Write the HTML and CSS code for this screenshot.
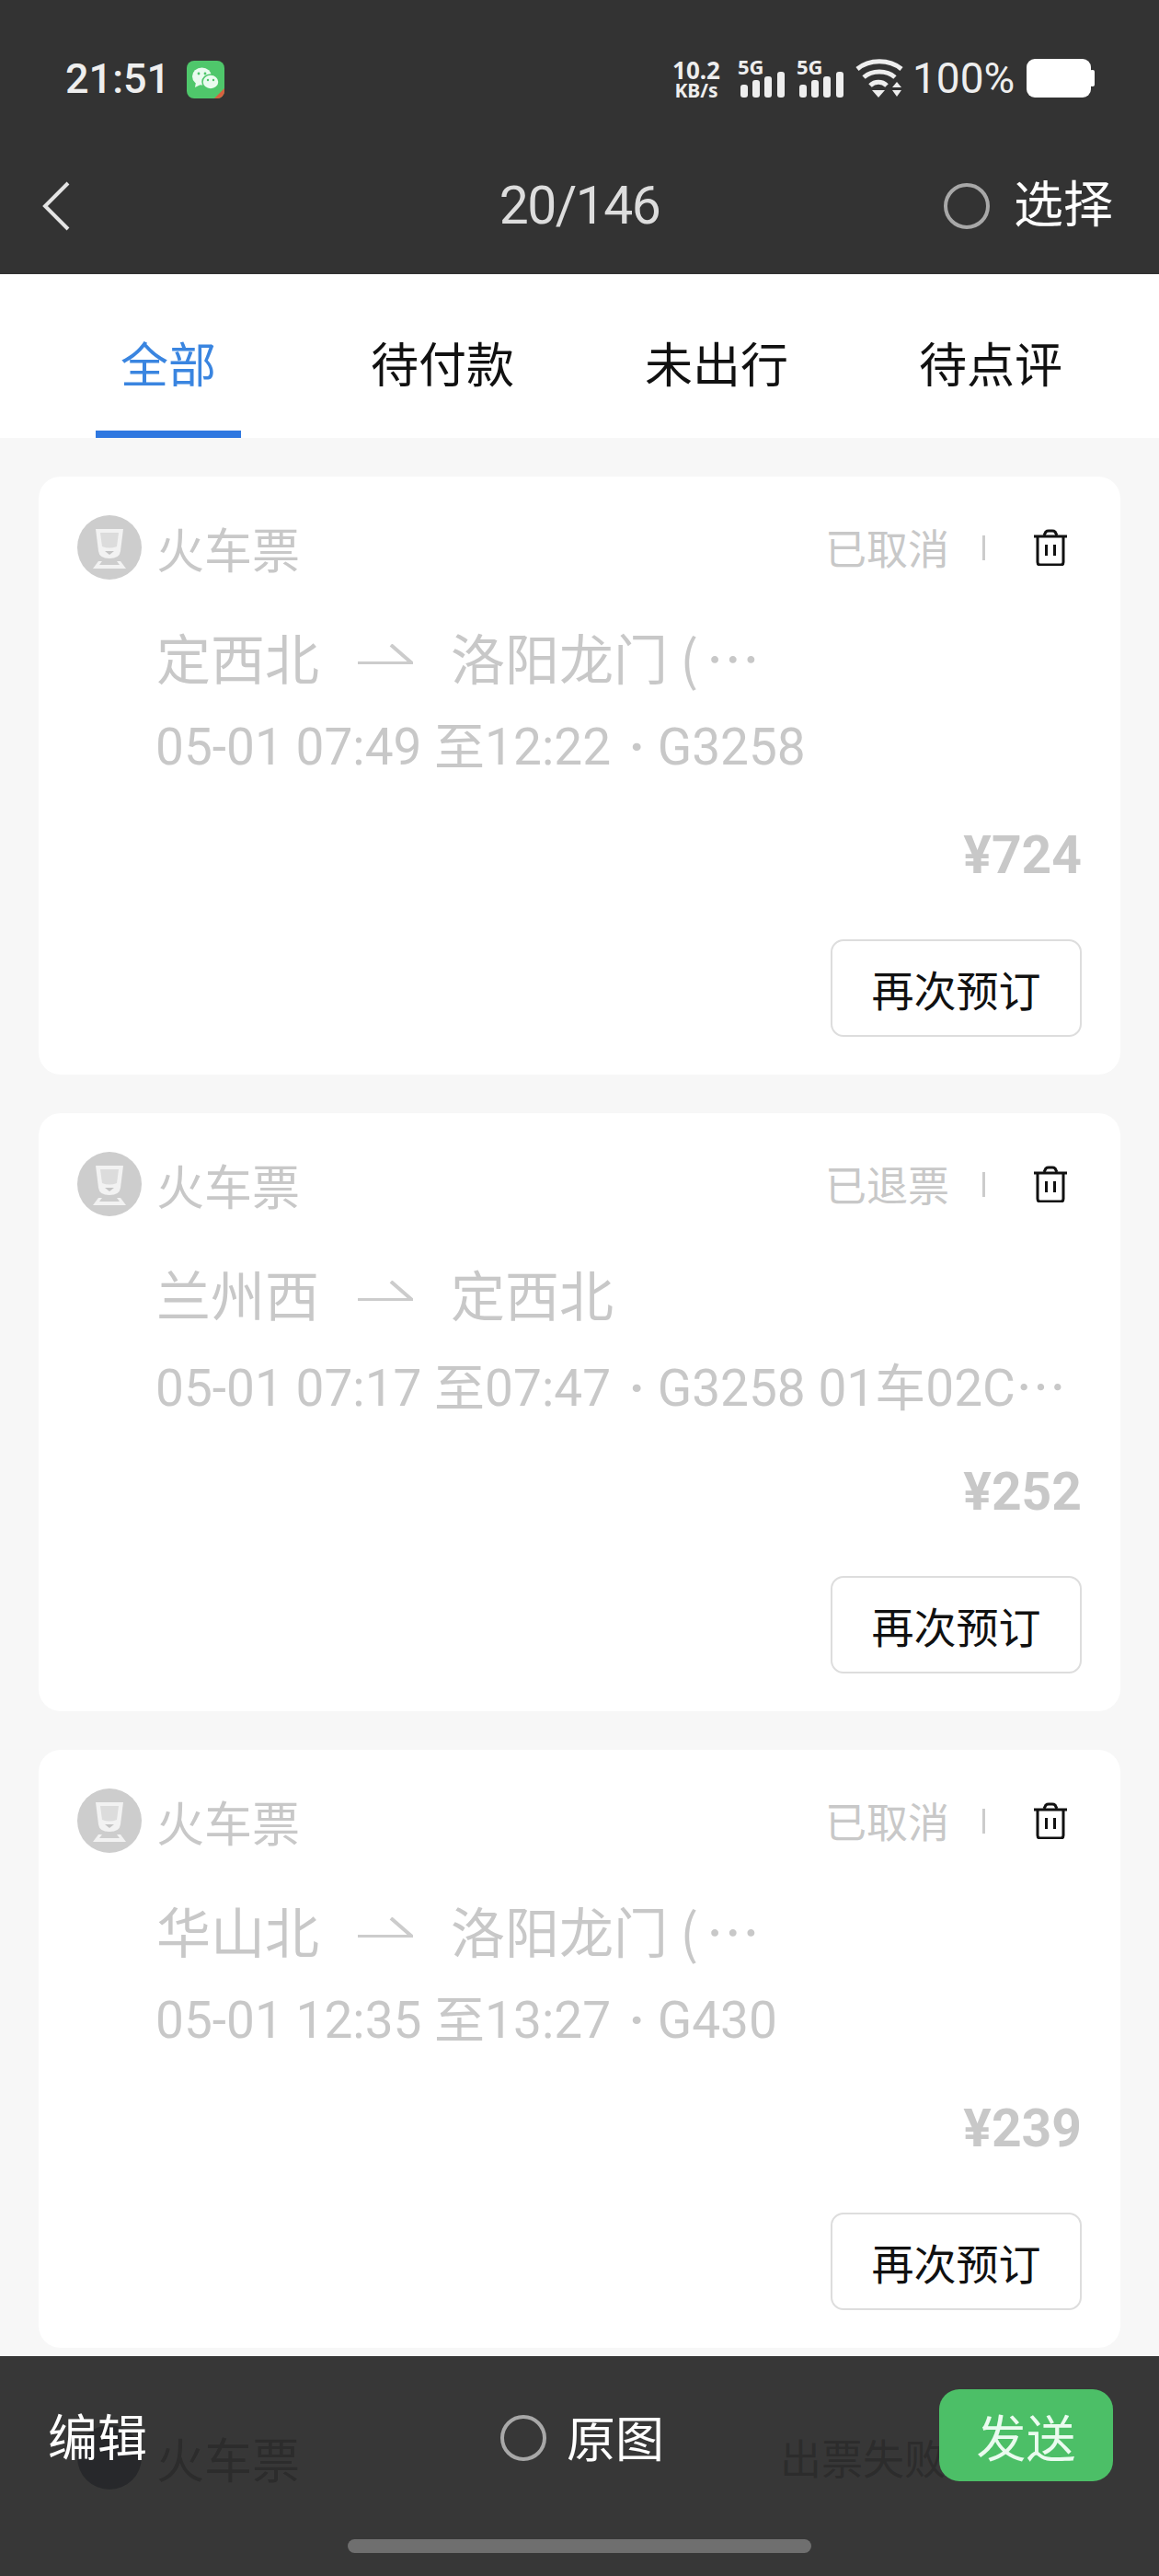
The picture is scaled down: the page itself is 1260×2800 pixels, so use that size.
FILE: index.html
```html
<!DOCTYPE html>
<html lang="zh-CN">
<head>
<meta charset="utf-8">
<title>订单</title>
<link rel="stylesheet" href="styles.css">
</head>
<body>
<div class="screen">
  <header class="top">
    <div class="status">
      <div class="status-left">
        <span class="clock">21:51</span>
        <svg class="wechat" viewBox="0 0 41 41" width="41" height="41">
          <rect width="41" height="41" rx="8" fill="#4fc76b"/>
          <path d="M41 30v3a8 8 0 0 1-8 8h-3z" fill="#d8603f"/>
          <ellipse cx="16.500" cy="17" rx="10.500" ry="9.500" fill="#eafbef"/>
          <path d="M10 23l-1 6 6-3z" fill="#eafbef"/>
          <ellipse cx="26" cy="23" rx="9" ry="8" fill="#eafbef" stroke="#4fc76b" stroke-width="1.500"/>
          <circle cx="13" cy="14" r="1.400" fill="#4fc76b"/><circle cx="20" cy="14" r="1.400" fill="#4fc76b"/>
          <circle cx="23" cy="21" r="1.200" fill="#4fc76b"/><circle cx="29" cy="21" r="1.200" fill="#4fc76b"/>
        </svg>
      </div>
      <div class="status-right">
        <div class="speed"><span>10.2</span><span>KB/s</span></div>
        <div class="signal">
          <span class="five-g">5G</span>
          <svg viewBox="0 0 48 28" width="48" height="28"><g fill="#eee"><rect x="0" y="14" width="8" height="14" rx="3"/><rect x="13" y="9" width="8" height="19" rx="3"/><rect x="26" y="5" width="8" height="23" rx="3"/><rect x="40" y="0" width="8" height="28" rx="3"/></g></svg>
        </div>
        <div class="signal">
          <span class="five-g">5G</span>
          <svg viewBox="0 0 48 28" width="48" height="28"><g fill="#eee"><rect x="0" y="14" width="8" height="14" rx="3"/><rect x="13" y="9" width="8" height="19" rx="3"/><rect x="26" y="5" width="8" height="23" rx="3"/><rect x="40" y="0" width="8" height="28" rx="3"/></g></svg>
        </div>
        <svg class="wifi" viewBox="0 0 52 42" width="52" height="42">
          <g fill="none" stroke="#eee" stroke-width="5">
            <path d="M2 11C15 0 37 0 50 11"/>
            <path d="M9 20C18 12 34 12 43 20"/>
            <path d="M16 29C21 24 29 24 34 29"/>
          </g>
          <path d="M18 34h14l-7 8z" fill="#eee"/>
          <path d="M40 31l5-6 5 6zM40 34h10l-5 7z" fill="#eee"/>
        </svg>
        <span class="percent">100%</span>
        <svg class="battery" viewBox="0 0 74 42" width="74" height="42">
          <rect width="70" height="42" rx="9" fill="#fff"/>
          <rect x="69" y="12" width="5" height="18" rx="2" fill="#fff"/>
        </svg>
      </div>
    </div>
    <nav class="nav">
      <svg class="back" viewBox="0 0 30 54" width="30" height="54"><path d="M28 2L3 27l25 25" fill="none" stroke="#e4e4e4" stroke-width="4"/></svg>
      <span class="count">20/146</span>
      <div class="pick"><span class="ring"></span><span class="pick-label">选择</span></div>
    </nav>
  </header>

  <div class="tabs">
    <div class="tab"><span class="tab-label tab-active">全部</span></div>
    <div class="tab"><span class="tab-label">待付款</span></div>
    <div class="tab"><span class="tab-label">未出行</span></div>
    <div class="tab"><span class="tab-label">待点评</span></div>
  </div>

  <main class="list">
    <article class="card">
      <div class="card-head">
        <svg class="avatar" viewBox="0 0 70 70" width="70" height="70"><circle cx="35" cy="35" r="35" fill="#cdcdcd"/><path d="M20 15h30l-3 24q-1 8-12 8t-12-8z" fill="#f2f2f2"/><path d="M25 19h20l-2 15q-8 3-16 0z" fill="#dcdcdc"/><path d="M30 39h10l-5 4z" fill="#c4c4c4"/><path d="M17 58l6-8h4l-3 4h22l-3-4h4l6 8z" fill="#f2f2f2"/></svg>
        <span class="kind">火车票</span>
        <span class="state">已取消</span>
        <span class="rule"></span>
        <svg class="trash" viewBox="0 0 36 40" width="36" height="40"><g fill="none" stroke="#111" stroke-width="3"><path d="M0 8h36"/><path d="M11 7l2-4q1-1 3-1h4q2 0 3 1l2 4"/><path d="M4 8v28q0 3 3 3h22q3 0 3-3V8"/><path d="M13.500 17v12M22.500 17v12"/></g></svg>
      </div>
      <div class="route">
        <span>定西北</span>
        <svg class="arrow" viewBox="0 0 60 22" width="60" height="22"><path d="M0 21h59L36 1" fill="none" stroke="#ccc" stroke-width="4"/></svg>
        <span>洛阳龙门 (<span class="route-more">…</span></span>
      </div>
      <div class="meta">05-01 07:49 至12:22<span class="dot">·</span>G3258</div>
      <div class="price">¥724</div>
      <div class="actions"><button class="again">再次预订</button></div>
    </article>

    <article class="card">
      <div class="card-head">
        <svg class="avatar" viewBox="0 0 70 70" width="70" height="70"><circle cx="35" cy="35" r="35" fill="#cdcdcd"/><path d="M20 15h30l-3 24q-1 8-12 8t-12-8z" fill="#f2f2f2"/><path d="M25 19h20l-2 15q-8 3-16 0z" fill="#dcdcdc"/><path d="M30 39h10l-5 4z" fill="#c4c4c4"/><path d="M17 58l6-8h4l-3 4h22l-3-4h4l6 8z" fill="#f2f2f2"/></svg>
        <span class="kind">火车票</span>
        <span class="state">已退票</span>
        <span class="rule"></span>
        <svg class="trash" viewBox="0 0 36 40" width="36" height="40"><g fill="none" stroke="#111" stroke-width="3"><path d="M0 8h36"/><path d="M11 7l2-4q1-1 3-1h4q2 0 3 1l2 4"/><path d="M4 8v28q0 3 3 3h22q3 0 3-3V8"/><path d="M13.500 17v12M22.500 17v12"/></g></svg>
      </div>
      <div class="route">
        <span>兰州西</span>
        <svg class="arrow" viewBox="0 0 60 22" width="60" height="22"><path d="M0 21h59L36 1" fill="none" stroke="#ccc" stroke-width="4"/></svg>
        <span>定西北</span>
      </div>
      <div class="meta">05-01 07:17 至07:47<span class="dot">·</span>G3258 01车02C<span class="more">…</span></div>
      <div class="price">¥252</div>
      <div class="actions"><button class="again">再次预订</button></div>
    </article>

    <article class="card">
      <div class="card-head">
        <svg class="avatar" viewBox="0 0 70 70" width="70" height="70"><circle cx="35" cy="35" r="35" fill="#cdcdcd"/><path d="M20 15h30l-3 24q-1 8-12 8t-12-8z" fill="#f2f2f2"/><path d="M25 19h20l-2 15q-8 3-16 0z" fill="#dcdcdc"/><path d="M30 39h10l-5 4z" fill="#c4c4c4"/><path d="M17 58l6-8h4l-3 4h22l-3-4h4l6 8z" fill="#f2f2f2"/></svg>
        <span class="kind">火车票</span>
        <span class="state">已取消</span>
        <span class="rule"></span>
        <svg class="trash" viewBox="0 0 36 40" width="36" height="40"><g fill="none" stroke="#111" stroke-width="3"><path d="M0 8h36"/><path d="M11 7l2-4q1-1 3-1h4q2 0 3 1l2 4"/><path d="M4 8v28q0 3 3 3h22q3 0 3-3V8"/><path d="M13.500 17v12M22.500 17v12"/></g></svg>
      </div>
      <div class="route">
        <span>华山北</span>
        <svg class="arrow" viewBox="0 0 60 22" width="60" height="22"><path d="M0 21h59L36 1" fill="none" stroke="#ccc" stroke-width="4"/></svg>
        <span>洛阳龙门 (<span class="route-more">…</span></span>
      </div>
      <div class="meta">05-01 12:35 至13:27<span class="dot">·</span>G430</div>
      <div class="price">¥239</div>
      <div class="actions"><button class="again">再次预订</button></div>
    </article>

    <article class="card card-under">
      <div class="card-head">
        <svg class="avatar" viewBox="0 0 70 70" width="70" height="70"><circle cx="35" cy="35" r="35" fill="#5b6a80"/></svg>
        <span class="kind">火车票</span>
        <span class="state">出票失败</span>
      </div>
    </article>
  </main>

  <footer class="bottom">
    <span class="edit">编辑</span>
    <div class="original"><span class="ring"></span><span class="original-label">原图</span></div>
    <button class="send">发送</button>
    <span class="home"></span>
  </footer>
</div>
</body>
</html>
```
FILE: styles.css
```css
* { box-sizing: border-box; }
html, body { margin: 0; padding: 0; }
body {
  width: 1260px;
  height: 2800px;
  overflow: hidden;
  font-family: Roboto, "Noto Sans CJK SC", sans-serif;
  background: #f7f7f7;
}
.screen { position: relative; width: 1260px; height: 2800px; overflow: hidden; }

.top { background: #333; height: 298px; display: flex; flex-direction: column; }
.status {
  height: 150px;
  padding: 64px 70px 0 71px;
  display: flex;
  justify-content: space-between;
  align-items: flex-start;
}
.status-left { display: flex; align-items: center; gap: 18px; height: 44px; }
.clock { font-size: 45px; font-weight: 500; line-height: 44px; color: #eee; }
.wechat { display: block; }
.status-right { display: flex; align-items: flex-start; height: 42px; }
.speed {
  display: flex; flex-direction: column; align-items: center;
  font-family: "Noto Sans", sans-serif;
  font-weight: 700; color: #eee; width: 54px; margin-right: 21px;
  font-size: 26px; line-height: 24px;
}
.speed span + span { font-size: 21px; line-height: 20px; }
.signal { position: relative; width: 48px; height: 42px; margin-right: 16px; display: flex; align-items: flex-end; }
.signal svg { display: block; }
.five-g {
  position: absolute; left: -3px; top: -2px;
  font-family: "Noto Sans", sans-serif;
  font-size: 22px; line-height: 20px; font-weight: 700; color: #eee;
}
.wifi { margin: 0 10px 0 -3px; display: block; }
.percent { font-size: 46px; line-height: 42px; color: #eee; width: 108px; margin-right: 16px; white-space: nowrap; }
.battery { display: block; }

.nav {
  height: 148px;
  padding: 0 50px 0 46px;
  display: flex;
  align-items: center;
  justify-content: space-between;
  position: relative;
}
.back { display: block; }
.count {
  position: absolute; left: 0; right: 0; text-align: center;
  font-size: 57px; letter-spacing: -1.500px; color: #ddd; line-height: 60px;
}
.pick { display: flex; align-items: center; gap: 26px; }
.ring {
  display: block; width: 50px; height: 50px;
  border: 4px solid #a8a8a8; border-radius: 50%;
}
.pick-label { font-size: 54px; line-height: 60px; color: #fff; }

.tabs { background: #fff; height: 178px; padding: 0 34px; display: flex; }
.tab { flex: 1; display: flex; justify-content: center; }
.tab-label {
  display: block; width: 158px; height: 178px;
  padding-top: 71px; text-align: center;
  font-size: 52px; line-height: 60px; color: #111;
  white-space: nowrap;
}
.tab-active { color: #3a85e0; border-bottom: 8px solid #2f78e0; }

.list { padding: 42px 42px 0; display: flex; flex-direction: column; gap: 42px; }
.card { background: #fff; border-radius: 24px; height: 650px; padding: 42px 42px 0; flex: none; }
.card-head { display: flex; align-items: center; height: 70px; }
.avatar { display: block; flex: none; }
.kind { margin-left: 16px; padding-top: 12px; font-size: 52px; line-height: 70px; color: #c8c8c8; flex: 1; }
.state { padding-top: 8px; font-size: 45px; line-height: 70px; color: #c8c8c8; margin-right: 36px; }
.rule { width: 3px; height: 27px; background: #ccc; margin-right: 53px; }
.trash { display: block; margin-right: 16px; }
.route {
  margin: 49px 0 0 86px; height: 70px;
  display: flex; align-items: center;
  font-family: "Noto Sans CJK SC", sans-serif;
  font-size: 59px; line-height: 70px; color: #c8c8c8;
  white-space: nowrap;
}
.route-more { margin-left: 8px; }
.arrow { margin: 0 41px 0 42px; position: relative; top: -3px; }
.meta {
  margin: 31px 0 0 85px; height: 64px;
  font-size: 55px; line-height: 64px; color: #c8c8c8;
  white-space: nowrap;
}
.dot { margin: 0 14px 0 20px; font-weight: 700; }
.more { font-family: "Noto Sans CJK SC", sans-serif; }
.price {
  margin: 56px 0 0; height: 60px; text-align: right;
  font-size: 57px; line-height: 60px; font-weight: 700; color: #c8c8c8;
}
.actions { margin-top: 61px; display: flex; justify-content: flex-end; }
.again {
  width: 273px; height: 106px; padding: 0;
  background: #fff; border: 2px solid #ddd; border-radius: 14px;
  font-family: inherit; font-size: 46px; color: #111;
}

.card-under .kind, .card-under .state { color: #8a8a8a; }
.card-under .state { margin-right: 148px; }

.bottom {
  position: absolute; left: 0; right: 0; top: 2561px; height: 239px;
  background: rgba(33, 33, 33, .9);
  display: flex; align-items: flex-start;
  padding: 36px 50px 0 52px;
}
.edit { font-size: 54px; line-height: 110px; color: #fff; width: 105px; white-space: nowrap; flex: none; height: 106px; }
.original { display: flex; align-items: center; gap: 22px; height: 106px; margin-left: 387px; }
.original-label { padding-top: 6px; font-size: 53px; line-height: 60px; color: #fff; }
.send {
  margin-left: auto;
  width: 189px; height: 100px; padding: 0;
  background: #4cbf67; border: 0; border-radius: 22px;
  font-family: inherit; font-size: 54px; color: #eafbef;
}
.home {
  position: absolute; left: 378px; top: 199px;
  width: 504px; height: 15px; border-radius: 8px; background: #6f6f6f;
}
```
